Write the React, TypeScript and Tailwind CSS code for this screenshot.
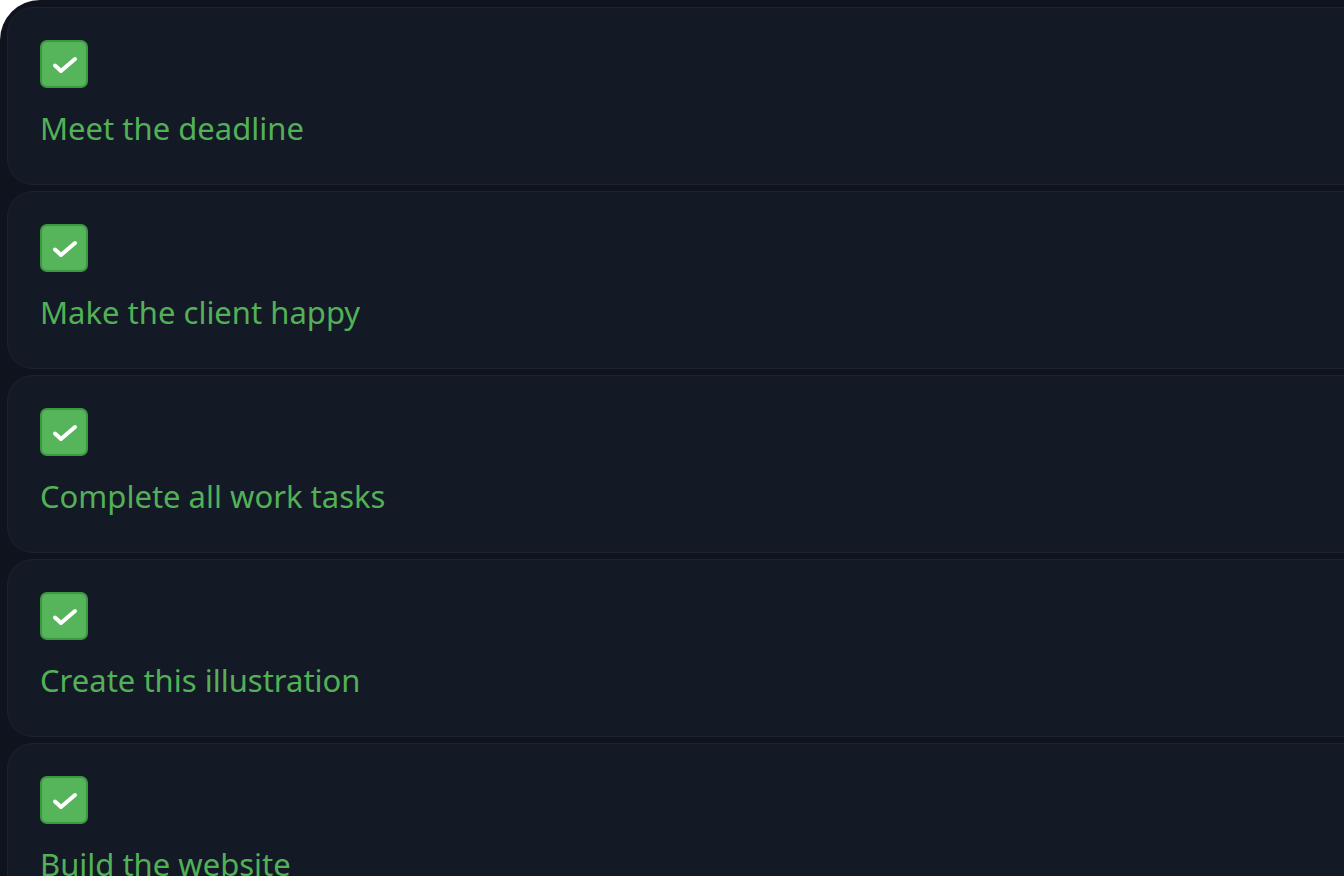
const tasks = [
  "Meet the deadline",
  "Make the client happy",
  "Complete all work tasks",
  "Create this illustration",
  "Build the website",
];

function CheckBox() {
  return (
    <div className="flex h-12 w-12 items-center justify-center rounded-[7px] border-2 border-[#3b9a3f] bg-[#56b45a]">
      <svg width="44" height="44" viewBox="0 0 44 44" fill="none">
        <path
          d="M13 23.5l6 5.5L33 17"
          stroke="white"
          strokeWidth="4"
          strokeLinecap="round"
          strokeLinejoin="round"
        />
      </svg>
    </div>
  );
}

export default function App() {
  return (
    <div className="h-[876px] w-[1344px] overflow-hidden bg-white">
      <div
        className="flex h-full w-[1400px] flex-col gap-[6px] overflow-hidden rounded-tl-[40px] bg-[#0f131e] pl-[7px] pt-[7px]"
        style={{ fontFamily: '"Noto Sans", "Open Sans", sans-serif' }}
      >
        {tasks.map((task) => (
          <div
            key={task}
            className="flex w-[1380px] shrink-0 flex-col gap-4 rounded-[26px] border border-[#1d2231] bg-[#141926] p-8"
          >
            <CheckBox />
            <span className="text-[31px] leading-[48px] text-[#52b157]">
              {task}
            </span>
          </div>
        ))}
      </div>
    </div>
  );
}
